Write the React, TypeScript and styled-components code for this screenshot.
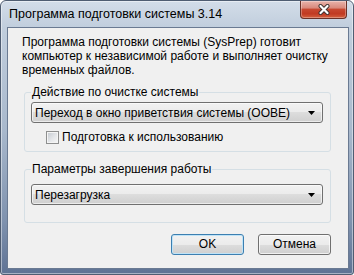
import { FC } from 'react';
import styled, { createGlobalStyle, css } from 'styled-components';

const GlobalStyle = createGlobalStyle`
  html,
  body {
    margin: 0;
    padding: 0;
    background: #ffffff;
  }

  body {
    font-family: 'Liberation Sans', Arial, sans-serif;
    font-size: 12px;
    color: #000000;
  }
`;

const StyledWindow = styled.div`
  box-sizing: border-box;
  width: 354px;
  height: 275px;
  display: flex;
  flex-direction: column;
  border: 1px solid #4f5d72;
  border-radius: 6px 6px 3px 3px;
  background: linear-gradient(
    to bottom,
    #d3dde9 0px,
    #c1cedd 26px,
    #a8b8cc 130px,
    #7f92ae 220px,
    #5d7193 275px
  );
  box-shadow: inset 0 0 0 1px rgba(255, 255, 255, 0.45);
`;

const StyledTitleBar = styled.div`
  height: 26px;
  display: flex;
  align-items: flex-start;
  flex-shrink: 0;
`;

const StyledTitle = styled.span`
  padding: 6px 0 0 8px;
  font-size: 12.5px;
  line-height: 15px;
  white-space: nowrap;
`;

const StyledCloseButton = styled.div`
  box-sizing: border-box;
  width: 47px;
  height: 18px;
  margin: 0 6px 0 auto;
  display: flex;
  align-items: center;
  justify-content: center;
  border: 1px solid #6a3128;
  border-top: none;
  border-radius: 0 0 4px 4px;
  background: linear-gradient(
    to bottom,
    #e9b4ab 0%,
    #d98a7d 40%,
    #c7472f 50%,
    #c13a22 75%,
    #d4613f 100%
  );
  box-shadow: inset 0 0 0 1px rgba(255, 255, 255, 0.3);
`;

const StyledClient = styled.div`
  flex: 1;
  margin: 0 4px 5px 6px;
  padding: 7px 17px 0 14px;
  display: flex;
  flex-direction: column;
  border: 1px solid #6a7a92;
  background: #f0f0f0;
`;

const StyledDescription = styled.p`
  margin: 0;
  line-height: 14px;
  white-space: nowrap;
`;

const StyledGroup = styled.fieldset<{ $top: number; $bottom: number }>`
  margin: ${({ $top }) => $top}px 0 0 2px;
  padding: 0 7px ${({ $bottom }) => $bottom}px 6px;
  border: 1px solid #d5dfe5;
  border-radius: 3px;
  min-width: 0;
`;

const StyledLegend = styled.legend`
  padding: 0 1px;
  line-height: 15px;
`;

const StyledCombo = styled.div<{ $top: number }>`
  box-sizing: border-box;
  height: 21px;
  margin-top: ${({ $top }) => $top}px;
  padding: 0 7px 0 3px;
  display: flex;
  align-items: center;
  justify-content: space-between;
  border: 1px solid #707070;
  border-radius: 3px;
  background: linear-gradient(
    to bottom,
    #f2f2f2 0%,
    #ebebeb 50%,
    #dddddd 50%,
    #cfcfcf 100%
  );
  box-shadow: inset 0 0 0 1px rgba(255, 255, 255, 0.6);
  white-space: nowrap;
`;

const StyledCheckRow = styled.label`
  margin-top: 7px;
  padding-left: 15px;
  height: 15px;
  display: flex;
  align-items: center;
  gap: 3px;
  line-height: 15px;
`;

const StyledCheckbox = styled.span`
  box-sizing: border-box;
  width: 13px;
  height: 13px;
  flex-shrink: 0;
  border: 1px solid #8e8f8f;
  background: linear-gradient(135deg, #c3c8cf 0%, #e4e6e9 55%, #f7f7f7 100%);
  box-shadow: inset 0 0 0 1px #f4f4f4;
`;

const StyledButtons = styled.div`
  margin-top: 11px;
  display: flex;
  justify-content: flex-end;
  gap: 14px;
`;

const StyledButton = styled.button<{ $isDefault?: boolean }>`
  box-sizing: border-box;
  width: 73px;
  height: 21px;
  padding: 0;
  font: inherit;
  line-height: 15px;
  color: #000000;
  border: 1px solid #707070;
  border-radius: 3px;
  background: linear-gradient(
    to bottom,
    #f2f2f2 0%,
    #ebebeb 50%,
    #dddddd 50%,
    #cfcfcf 100%
  );
  box-shadow: inset 0 0 0 1px rgba(255, 255, 255, 0.7);

  ${({ $isDefault }) =>
    $isDefault &&
    css`
      border-color: #3c7fb1;
      box-shadow: inset 0 0 0 1px #bfe3f7;
    `}
`;

const CloseGlyph: FC = () => (
  <svg width="12" height="11" viewBox="0 0 12 11">
    <path d="M2.5 2 L9.5 9 M9.5 2 L2.5 9" stroke="#3d3230" strokeWidth="4" strokeLinecap="round" />
    <path d="M2.5 2 L9.5 9 M9.5 2 L2.5 9" stroke="#ffffff" strokeWidth="2.2" strokeLinecap="round" />
  </svg>
);

const ComboArrow: FC = () => (
  <svg width="7" height="4" viewBox="0 0 7 4">
    <polygon points="0,0 7,0 3.5,4" fill="#000000" />
  </svg>
);

const Combo: FC<{ value: string; top: number }> = ({ value, top }) => (
  <StyledCombo $top={top}>
    <span>{value}</span>
    <ComboArrow />
  </StyledCombo>
);

export default function App() {
  return (
    <>
      <GlobalStyle />
      <StyledWindow>
        <StyledTitleBar>
          <StyledTitle>Программа подготовки системы 3.14</StyledTitle>
          <StyledCloseButton>
            <CloseGlyph />
          </StyledCloseButton>
        </StyledTitleBar>
        <StyledClient>
          <StyledDescription>
            Программа подготовки системы (SysPrep) готовит
            <br />
            компьютер к независимой работе и выполняет очистку
            <br />
            временных файлов.
          </StyledDescription>
          <StyledGroup $top={8} $bottom={6}>
            <StyledLegend>Действие по очистке системы</StyledLegend>
            <Combo value="Переход в окно приветствия системы (OOBE)" top={2} />
            <StyledCheckRow>
              <StyledCheckbox />
              Подготовка к использованию
            </StyledCheckRow>
          </StyledGroup>
          <StyledGroup $top={10} $bottom={17}>
            <StyledLegend>Параметры завершения работы</StyledLegend>
            <Combo value="Перезагрузка" top={7} />
          </StyledGroup>
          <StyledButtons>
            <StyledButton $isDefault>OK</StyledButton>
            <StyledButton>Отмена</StyledButton>
          </StyledButtons>
        </StyledClient>
      </StyledWindow>
    </>
  );
}
